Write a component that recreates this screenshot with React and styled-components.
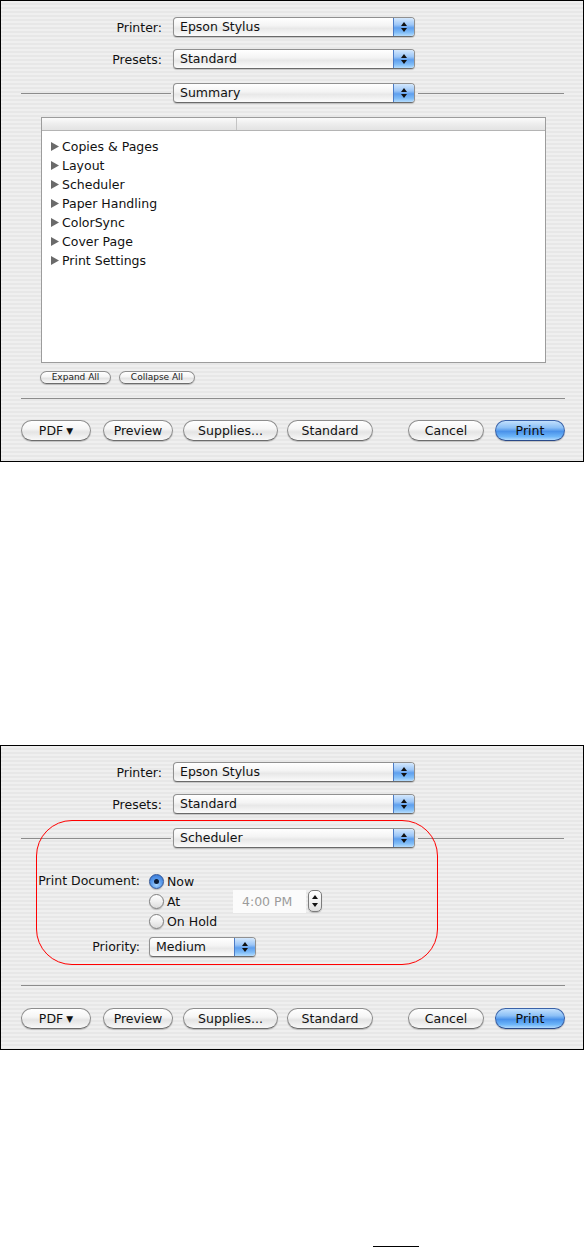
import React from "react";
import styled, { createGlobalStyle, css } from "styled-components";

const GlobalStyle = createGlobalStyle`
  html, body { margin: 0; padding: 0; background: #fff; overflow: hidden; }
  body { font-family: "DejaVu Sans", "Liberation Sans", sans-serif; }
`;

const Page = styled.div`
  display: flex;
  flex-direction: column;
  width: 585px;
`;

const Dialog = styled.section`
  position: relative;
  box-sizing: border-box;
  width: 584px;
  height: ${(p) => p.$h}px;
  margin-top: ${(p) => p.$mt || 0}px;
  border: 1px solid #000;
  padding-top: 16px;
  display: flex;
  flex-direction: column;
  font-size: 12.5px;
  color: #111;
  background: repeating-linear-gradient(
    to bottom,
    #efefef 0px,
    #efefef 2px,
    #e7e7e7 2px,
    #e7e7e7 4px
  );
`;

const FormRow = styled.div`
  display: flex;
  align-items: center;
  height: 20px;
  margin-top: ${(p) => p.$mt || 0}px;
`;

const RowLabel = styled.span`
  width: 161px;
  margin-right: 11px;
  text-align: right;
  white-space: nowrap;
`;

const SectionRow = styled.div`
  display: flex;
  align-items: center;
  height: 20px;
  margin-top: 14px;
  padding-left: 20px;
`;

const Rule = styled.div`
  height: 1px;
  width: ${(p) => p.$w}px;
  margin-left: ${(p) => p.$ml || 0}px;
  margin-right: ${(p) => p.$mr || 0}px;
  background: #8c8c8c;
  flex: none;
`;

const PopupBox = styled.div`
  display: flex;
  flex: none;
  box-sizing: border-box;
  width: ${(p) => p.$w}px;
  height: 20px;
  border: 1px solid #909090;
  border-bottom-color: #6a6a6a;
  border-radius: 4px;
  overflow: hidden;
  background: linear-gradient(#ffffff, #f4f4f4 42%, #e8e8e8 58%, #fbfbfb);
  box-shadow: 0 1px 1px rgba(0, 0, 0, 0.18);
`;

const PopupText = styled.span`
  flex: 1;
  padding-left: 6px;
  line-height: 18px;
  white-space: nowrap;
`;

const PopupArrows = styled.span`
  flex: none;
  width: 20px;
  display: flex;
  flex-direction: column;
  align-items: center;
  justify-content: center;
  gap: 2px;
  border-left: 1px solid #4c7cc6;
  background: linear-gradient(#d4e8fd, #9cc6f7 38%, #5e9fee 55%, #7fbcf7 80%, #b5dcfd);
`;

const Arrow = ({ down }) => (
  <svg width="6" height="4" viewBox="0 0 6 4">
    <polygon points={down ? "0,0 6,0 3,4" : "3,0 6,4 0,4"} fill="#111" />
  </svg>
);

const Popup = ({ w, children }) => (
  <PopupBox $w={w}>
    <PopupText>{children}</PopupText>
    <PopupArrows>
      <Arrow />
      <Arrow down />
    </PopupArrows>
  </PopupBox>
);

const Table = styled.div`
  box-sizing: border-box;
  width: 505px;
  height: 246px;
  margin: 14px 0 0 40px;
  border: 1px solid #9c9c9c;
  background: #fff;
  display: flex;
  flex-direction: column;
`;

const TableHeader = styled.div`
  display: grid;
  grid-template-columns: 194px 1fr;
  height: 12px;
  border-bottom: 1px solid #b4b4b4;
  background: linear-gradient(#fbfbfb, #ededed 50%, #e3e3e3);
`;

const HeaderCell = styled.div`
  border-left: ${(p) => (p.$divider ? "1px solid #c4c4c4" : "none")};
`;

const TreeList = styled.ul`
  list-style: none;
  margin: 0;
  padding: 6px 0 0 9px;
`;

const TreeItem = styled.li`
  display: flex;
  align-items: center;
  height: 19px;
  gap: 3px;
  white-space: nowrap;
`;

const Disclosure = () => (
  <svg width="8" height="9" viewBox="0 0 8 9">
    <polygon points="0,0 8,4.5 0,9" fill="#6a6a6a" />
  </svg>
);

const SmallBar = styled.div`
  display: flex;
  gap: 8px;
  margin: 8px 0 0 39px;
`;

const pill = css`
  box-sizing: border-box;
  padding: 0;
  flex: none;
  font-family: "DejaVu Sans", "Liberation Sans", sans-serif;
  color: #111;
  border: 1px solid #8e8e8e;
  border-bottom-color: #6c6c6c;
  background: linear-gradient(#ffffff, #f5f5f5 42%, #e4e4e4 58%, #f8f8f8);
  box-shadow: 0 1px 1px rgba(0, 0, 0, 0.2);
`;

const SmallButton = styled.button`
  ${pill};
  width: ${(p) => p.$w}px;
  height: 13px;
  border-radius: 7px;
  font-size: 9px;
  line-height: 11px;
  color: #222;
`;

const Divider = styled.div`
  height: 1px;
  width: 544px;
  margin: ${(p) => p.$mt}px 0 0 20px;
  background: #8c8c8c;
`;

const ButtonBar = styled.div`
  display: flex;
  align-items: center;
  margin-top: ${(p) => p.$mt}px;
  padding-left: 20px;
`;

const Button = styled.button`
  ${pill};
  width: ${(p) => p.$w}px;
  height: 21px;
  margin-left: ${(p) => p.$ml || 0}px;
  border-radius: 11px;
  font-size: 12.5px;
  ${(p) =>
    p.$primary &&
    css`
      color: #0a0a0a;
      border-color: #3a62a8;
      border-bottom-color: #2a4a88;
      background: linear-gradient(#c2e0fd, #8cc0f6 35%, #4a92ea 55%, #6eb6f9 82%, #b2dafd);
    `}
`;

const Caret = styled.span`
  font-size: 9px;
  margin-left: 3px;
  vertical-align: 1px;
`;

const SchedGrid = styled.div`
  display: grid;
  grid-template-columns: 139px auto;
  column-gap: 9px;
  row-gap: 6px;
  margin-top: 23px;
  align-items: start;
`;

const SchedLabel = styled.span`
  text-align: right;
  line-height: 20px;
  white-space: nowrap;
`;

const RadioGroup = styled.div`
  display: grid;
  grid-template-columns: 84px auto auto;
  grid-auto-rows: 20px;
  align-items: center;
  justify-content: start;
`;

const RadioOption = styled.label`
  grid-column: 1;
  display: flex;
  align-items: center;
  gap: 3px;
  white-space: nowrap;
`;

const RadioDot = styled.span`
  box-sizing: border-box;
  width: 15px;
  height: 15px;
  border-radius: 50%;
  flex: none;
  display: flex;
  align-items: center;
  justify-content: center;
  border: 1px solid ${(p) => (p.$on ? "#2f5597" : "#7e7e7e")};
  background: ${(p) =>
    p.$on
      ? "radial-gradient(circle at 50% 75%, #a9d6fd 0%, #5b9cec 45%, #2f6fd0 100%)"
      : "linear-gradient(#ffffff, #f0f0f0 50%, #dcdcdc)"};
  box-shadow: 0 1px 1px rgba(0, 0, 0, 0.2);
  &::after {
    content: "";
    display: ${(p) => (p.$on ? "block" : "none")};
    width: 5px;
    height: 5px;
    border-radius: 50%;
    background: #0d1c35;
  }
`;

const TimeField = styled.span`
  grid-column: 2;
  grid-row: 2;
  box-sizing: border-box;
  width: 73px;
  height: 23px;
  padding-left: 9px;
  line-height: 23px;
  background: #fbfbfb;
  color: #9b9b9b;
  white-space: nowrap;
`;

const StepperBox = styled.span`
  grid-column: 3;
  grid-row: 2;
  box-sizing: border-box;
  width: 14px;
  height: 22px;
  margin-left: 2px;
  border: 1px solid #7c7c7c;
  border-radius: 5px;
  display: flex;
  flex-direction: column;
  align-items: center;
  justify-content: center;
  gap: 4px;
  background: linear-gradient(#ffffff, #f1f1f1 50%, #dedede);
  box-shadow: 0 1px 1px rgba(0, 0, 0, 0.2);
`;

const Annotation = styled.div`
  position: absolute;
  left: 35px;
  top: 74px;
  width: 402px;
  height: 145px;
  box-sizing: border-box;
  border: 1px solid #ff0000;
  border-radius: 36px;
  pointer-events: none;
`;

const FootMark = styled.div`
  width: 46px;
  height: 1px;
  margin: 196px 0 0 373px;
  background: #000;
`;

const items = [
  "Copies & Pages",
  "Layout",
  "Scheduler",
  "Paper Handling",
  "ColorSync",
  "Cover Page",
  "Print Settings",
];

const Header = ({ section }) => (
  <>
    <FormRow>
      <RowLabel>Printer:</RowLabel>
      <Popup w={242}>Epson Stylus</Popup>
    </FormRow>
    <FormRow $mt={12}>
      <RowLabel>Presets:</RowLabel>
      <Popup w={242}>Standard</Popup>
    </FormRow>
    <SectionRow>
      <Rule $w={150} $mr={2} />
      <Popup w={242}>{section}</Popup>
      <Rule $w={146} $ml={3} />
    </SectionRow>
  </>
);

const Footer = ({ dividerTop, barTop }) => (
  <>
    <Divider $mt={dividerTop} />
    <ButtonBar $mt={barTop}>
      <Button $w={70}>
        PDF<Caret>▼</Caret>
      </Button>
      <Button $w={70} $ml={12}>Preview</Button>
      <Button $w={95} $ml={10}>Supplies...</Button>
      <Button $w={86} $ml={9}>Standard</Button>
      <Button $w={76} $ml={35}>Cancel</Button>
      <Button $w={70} $ml={11} $primary>
        Print
      </Button>
    </ButtonBar>
  </>
);

export default function App() {
  return (
    <Page>
      <GlobalStyle />
      <Dialog $h={462}>
        <Header section="Summary" />
        <Table>
          <TableHeader>
            <HeaderCell />
            <HeaderCell $divider />
          </TableHeader>
          <TreeList>
            {items.map((t) => (
              <TreeItem key={t}>
                <Disclosure />
                {t}
              </TreeItem>
            ))}
          </TreeList>
        </Table>
        <SmallBar>
          <SmallButton $w={71}>Expand All</SmallButton>
          <SmallButton $w={76}>Collapse All</SmallButton>
        </SmallBar>
        <Footer dividerTop={14} barTop={21} />
      </Dialog>

      <Dialog $h={305} $mt={283}>
        <Header section="Scheduler" />
        <SchedGrid>
          <SchedLabel>Print Document:</SchedLabel>
          <RadioGroup>
            <RadioOption>
              <RadioDot $on />
              Now
            </RadioOption>
            <RadioOption>
              <RadioDot />
              At
            </RadioOption>
            <TimeField>4:00 PM</TimeField>
            <StepperBox>
              <Arrow />
              <Arrow down />
            </StepperBox>
            <RadioOption>
              <RadioDot />
              On Hold
            </RadioOption>
          </RadioGroup>
          <SchedLabel>Priority:</SchedLabel>
          <Popup w={107}>Medium</Popup>
        </SchedGrid>
        <Footer dividerTop={28} barTop={22} />
        <Annotation />
      </Dialog>

      <FootMark />
    </Page>
  );
}
